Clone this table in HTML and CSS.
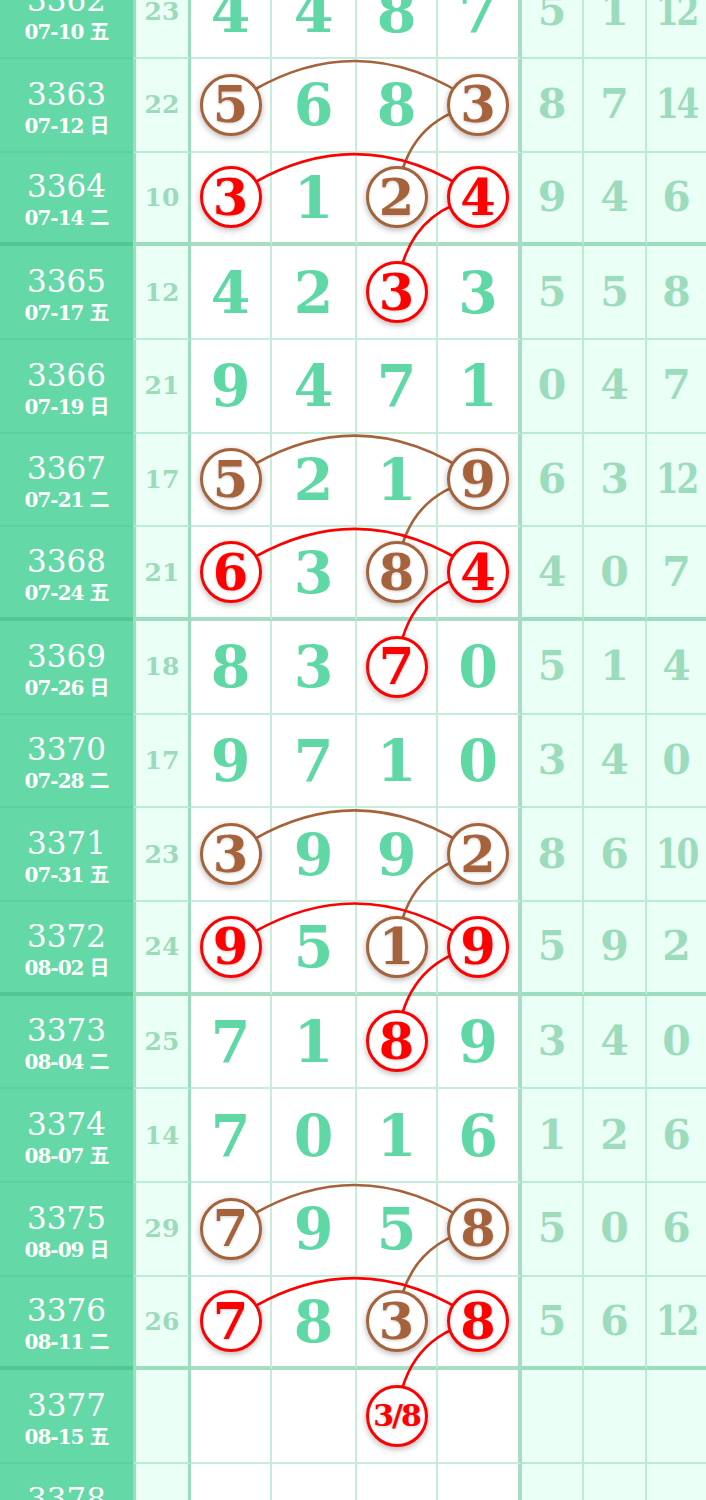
FILE: index.html
```html
<!DOCTYPE html>
<html lang="zh-CN">
<head>
    <meta charset="UTF-8">
    <meta name="viewport" content="width=device-width, initial-scale=1.0">
    <title>走势图</title>
    <link rel="stylesheet" href="styles.css">
</head>
<body>

<div class="chart">
    <!-- links between the marked balls, drawn under them -->
    <svg class="links" width="706" height="1560" viewBox="0 0 706 1560">
        <g class="brown-line">
            <path d="M231 139.5 Q355 52.5 478 139.5"/>
            <path d="M478 139.5 Q405 154.5 397 232.2"/>
            <path d="M231 514.2 Q355 427.2 478 514.2"/>
            <path d="M478 514.2 Q405 529.2 397 606.8"/>
            <path d="M231 888.8 Q355 801.8 478 888.8"/>
            <path d="M478 888.8 Q405 903.8 397 981.5"/>
            <path d="M231 1263.5 Q355 1176.5 478 1263.5"/>
            <path d="M478 1263.5 Q405 1278.5 397 1356.2"/>
        </g>
        <g class="red-line">
            <path d="M231 232.2 Q355 146.2 478 232.2"/>
            <path d="M478 232.2 Q405 247.2 397 326.8"/>
            <path d="M231 606.8 Q355 520.8 478 606.8"/>
            <path d="M478 606.8 Q405 621.8 397 701.5"/>
            <path d="M231 981.5 Q355 895.5 478 981.5"/>
            <path d="M478 981.5 Q405 996.5 397 1076.2"/>
            <path d="M231 1356.2 Q355 1270.2 478 1356.2"/>
            <path d="M478 1356.2 Q405 1371.2 397 1450.9"/>
        </g>
    </svg>

    <div class="row">
        <div class="c-no"><span class="no">3362</span><span class="date">07-10 五</span></div>
        <div class="c-sum">23</div>
        <div class="m">4</div><div class="m">4</div><div class="m">8</div><div class="m m4">7</div>
        <div class="r">5</div><div class="r">1</div><div class="r r3"><span class="two">12</span></div>
    </div>
    <div class="row">
        <div class="c-no"><span class="no">3363</span><span class="date">07-12 日</span></div>
        <div class="c-sum">22</div>
        <div class="m"><span class="ball brown">5</span></div><div class="m">6</div><div class="m">8</div><div class="m m4"><span class="ball brown">3</span></div>
        <div class="r">8</div><div class="r">7</div><div class="r r3"><span class="two">14</span></div>
    </div>
    <div class="row end">
        <div class="c-no"><span class="no">3364</span><span class="date">07-14 二</span></div>
        <div class="c-sum">10</div>
        <div class="m"><span class="ball red">3</span></div><div class="m">1</div><div class="m"><span class="ball brown">2</span></div><div class="m m4"><span class="ball red">4</span></div>
        <div class="r">9</div><div class="r">4</div><div class="r r3">6</div>
    </div>
    <div class="row">
        <div class="c-no"><span class="no">3365</span><span class="date">07-17 五</span></div>
        <div class="c-sum">12</div>
        <div class="m">4</div><div class="m">2</div><div class="m"><span class="ball red">3</span></div><div class="m m4">3</div>
        <div class="r">5</div><div class="r">5</div><div class="r r3">8</div>
    </div>
    <div class="row">
        <div class="c-no"><span class="no">3366</span><span class="date">07-19 日</span></div>
        <div class="c-sum">21</div>
        <div class="m">9</div><div class="m">4</div><div class="m">7</div><div class="m m4">1</div>
        <div class="r">0</div><div class="r">4</div><div class="r r3">7</div>
    </div>
    <div class="row">
        <div class="c-no"><span class="no">3367</span><span class="date">07-21 二</span></div>
        <div class="c-sum">17</div>
        <div class="m"><span class="ball brown">5</span></div><div class="m">2</div><div class="m">1</div><div class="m m4"><span class="ball brown">9</span></div>
        <div class="r">6</div><div class="r">3</div><div class="r r3"><span class="two">12</span></div>
    </div>
    <div class="row end">
        <div class="c-no"><span class="no">3368</span><span class="date">07-24 五</span></div>
        <div class="c-sum">21</div>
        <div class="m"><span class="ball red">6</span></div><div class="m">3</div><div class="m"><span class="ball brown">8</span></div><div class="m m4"><span class="ball red">4</span></div>
        <div class="r">4</div><div class="r">0</div><div class="r r3">7</div>
    </div>
    <div class="row">
        <div class="c-no"><span class="no">3369</span><span class="date">07-26 日</span></div>
        <div class="c-sum">18</div>
        <div class="m">8</div><div class="m">3</div><div class="m"><span class="ball red">7</span></div><div class="m m4">0</div>
        <div class="r">5</div><div class="r">1</div><div class="r r3">4</div>
    </div>
    <div class="row">
        <div class="c-no"><span class="no">3370</span><span class="date">07-28 二</span></div>
        <div class="c-sum">17</div>
        <div class="m">9</div><div class="m">7</div><div class="m">1</div><div class="m m4">0</div>
        <div class="r">3</div><div class="r">4</div><div class="r r3">0</div>
    </div>
    <div class="row">
        <div class="c-no"><span class="no">3371</span><span class="date">07-31 五</span></div>
        <div class="c-sum">23</div>
        <div class="m"><span class="ball brown">3</span></div><div class="m">9</div><div class="m">9</div><div class="m m4"><span class="ball brown">2</span></div>
        <div class="r">8</div><div class="r">6</div><div class="r r3"><span class="two">10</span></div>
    </div>
    <div class="row end">
        <div class="c-no"><span class="no">3372</span><span class="date">08-02 日</span></div>
        <div class="c-sum">24</div>
        <div class="m"><span class="ball red">9</span></div><div class="m">5</div><div class="m"><span class="ball brown">1</span></div><div class="m m4"><span class="ball red">9</span></div>
        <div class="r">5</div><div class="r">9</div><div class="r r3">2</div>
    </div>
    <div class="row">
        <div class="c-no"><span class="no">3373</span><span class="date">08-04 二</span></div>
        <div class="c-sum">25</div>
        <div class="m">7</div><div class="m">1</div><div class="m"><span class="ball red">8</span></div><div class="m m4">9</div>
        <div class="r">3</div><div class="r">4</div><div class="r r3">0</div>
    </div>
    <div class="row">
        <div class="c-no"><span class="no">3374</span><span class="date">08-07 五</span></div>
        <div class="c-sum">14</div>
        <div class="m">7</div><div class="m">0</div><div class="m">1</div><div class="m m4">6</div>
        <div class="r">1</div><div class="r">2</div><div class="r r3">6</div>
    </div>
    <div class="row">
        <div class="c-no"><span class="no">3375</span><span class="date">08-09 日</span></div>
        <div class="c-sum">29</div>
        <div class="m"><span class="ball brown">7</span></div><div class="m">9</div><div class="m">5</div><div class="m m4"><span class="ball brown">8</span></div>
        <div class="r">5</div><div class="r">0</div><div class="r r3">6</div>
    </div>
    <div class="row end">
        <div class="c-no"><span class="no">3376</span><span class="date">08-11 二</span></div>
        <div class="c-sum">26</div>
        <div class="m"><span class="ball red">7</span></div><div class="m">8</div><div class="m"><span class="ball brown">3</span></div><div class="m m4"><span class="ball red">8</span></div>
        <div class="r">5</div><div class="r">6</div><div class="r r3"><span class="two">12</span></div>
    </div>
    <div class="row">
        <div class="c-no"><span class="no">3377</span><span class="date">08-15 五</span></div>
        <div class="c-sum"></div>
        <div class="m"></div><div class="m"></div><div class="m"><span class="ball red small">3/8</span></div><div class="m m4"></div>
        <div class="r"></div><div class="r"></div><div class="r r3"></div>
    </div>
    <div class="row">
        <div class="c-no"><span class="no">3378</span><span class="date">08-18 日</span></div>
        <div class="c-sum"></div>
        <div class="m"></div><div class="m"></div><div class="m"></div><div class="m m4"></div>
        <div class="r"></div><div class="r"></div><div class="r r3"></div>
    </div>
</div>

</body>
</html>
```

FILE: styles.css
```css
body {
    margin: 0;
    padding: 0;
    background-color: #fff;
    font-family: "DejaVu Serif", "Noto Sans CJK SC", serif;
}
.chart {
    position: relative;
    margin-top: -34.67px;
}
.links {
    position: absolute;
    top: 0;
    left: 0;
    z-index: 1;
    pointer-events: none;
}
.links path {
    fill: none;
    stroke-width: 2.6;
}
.brown-line path {
    stroke: #a5623b;
}
.red-line path {
    stroke: #ff0000;
}
.row {
    display: grid;
    grid-template-columns: 133px 58px 81px 85px 81px 84px 62px 63px 59px;
    height: 93.67px;
}
.row > div {
    box-sizing: border-box;
    display: flex;
    align-items: center;
    justify-content: center;
    border-bottom: 2px solid rgba(80, 195, 140, 0.32);
}
.row.end > div {
    border-bottom: 4px solid rgba(60, 180, 125, 0.45);
}
.c-no {
    background-color: #64d8a6;
    color: #fff;
    flex-direction: column;
    padding-top: 5px;
}
.c-no .no {
    font-size: 31px;
    line-height: 34px;
}
.c-no .date {
    margin-top: 3px;
    font-size: 20px;
    font-weight: bold;
    letter-spacing: -1px;
    line-height: 24px;
}
.c-sum {
    background-color: #eafff5;
    border-left: 3px solid rgba(60, 180, 125, 0.45);
    border-right: 3px solid rgba(60, 180, 125, 0.45);
    color: #9cdabc;
    font-size: 25px;
    font-weight: bold;
}
.m {
    background-color: #fff;
    border-right: 2px solid rgba(80, 195, 140, 0.32);
    color: #5fd8a5;
    font-size: 57px;
    font-weight: bold;
    line-height: 1;
}
.m.m4 {
    border-right: 4px solid rgba(60, 180, 125, 0.45);
}
.r {
    background-color: #eafff5;
    border-right: 2px solid rgba(80, 195, 140, 0.32);
    color: #9cdcbd;
    font-size: 41px;
    font-weight: bold;
    line-height: 1;
}
.r.r3 {
    border-right: none;
}
.r .two {
    display: inline-block;
    letter-spacing: -3px;
    transform: scaleX(0.8);
}
.ball {
    position: relative;
    z-index: 2;
    box-sizing: border-box;
    width: 62px;
    height: 62px;
    border-radius: 50%;
    border: 3px solid;
    background-color: #fff;
    display: flex;
    align-items: center;
    justify-content: center;
    font-size: 51px;
    line-height: 1;
    box-shadow: 0 2px 6px rgba(0, 0, 0, 0.3);
    text-shadow: 0 1px 3px rgba(0, 0, 0, 0.2);
}
.ball.brown {
    border-color: #a5623b;
    color: #a5623b;
}
.ball.red {
    border-color: #ff0000;
    color: #ff0000;
}
.ball.small {
    font-size: 30px;
    letter-spacing: -2px;
}
```
